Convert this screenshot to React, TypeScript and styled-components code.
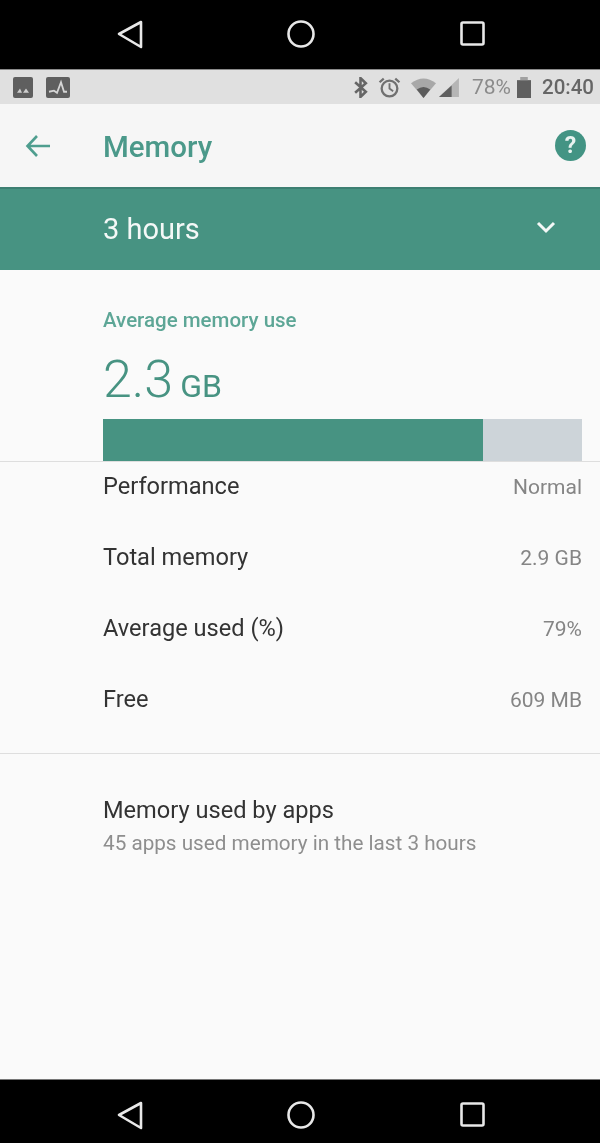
import React from 'react'
import styled, { createGlobalStyle } from 'styled-components'

const GlobalStyle = createGlobalStyle`
  html, body {
    margin: 0;
    padding: 0;
    background: #fafafa;
  }
  * {
    box-sizing: border-box;
  }
`

// the source is a soft, upscaled phone capture
const Screen = styled.div`
  width: 600px;
  height: 1143px;
  display: flex;
  flex-direction: column;
  background: #fafafa;
  font-family: Roboto, 'Liberation Sans', sans-serif;
  overflow: hidden;
  filter: blur(0.5px);
`

const NavBar = styled.div<{ $height: number; $line?: boolean }>`
  height: ${(p) => p.$height}px;
  flex: none;
  background: #000;
  position: relative;
  border-top: ${(p) => (p.$line ? '1px solid #777' : 'none')};
`

const NavIcon = styled.svg<{ $left: number; $top: number }>`
  position: absolute;
  left: ${(p) => p.$left}px;
  top: ${(p) => p.$top}px;
  width: 30px;
  height: 30px;
  fill: none;
  stroke: #e8e8e8;
  stroke-width: 2.6;
  stroke-linejoin: round;
`

const StatusBar = styled.div`
  height: 35px;
  flex: none;
  background: #e0e0e0;
  border-top: 1px solid #8a8a8a;
  display: flex;
  align-items: center;
  padding: 0 6px 0 13px;
  color: #666;
`

const StatusLeft = styled.div`
  display: flex;
  align-items: center;
  gap: 13px;
  flex: 1;
`

const StatusIcon = styled.svg.attrs({ preserveAspectRatio: 'none' })<{ $w: number; $ml?: number }>`
  width: ${(p) => p.$w}px;
  height: 21px;
  display: block;
  margin-left: ${(p) => p.$ml ?? 0}px;
`

const StatusRight = styled.div`
  display: flex;
  align-items: center;
`

const StatusText = styled.span<{ $ml: number; $light?: boolean }>`
  margin-left: ${(p) => p.$ml}px;
  font-size: ${(p) => (p.$light ? 21 : 20.5)}px;
  font-weight: ${(p) => (p.$light ? 400 : 500)};
  line-height: 20px;
  color: ${(p) => (p.$light ? '#8b8b8b' : '#666')};
`

const AppBar = styled.div`
  height: 83px;
  flex: none;
  background: #f6f6f6;
  display: flex;
  align-items: center;
  padding: 0 14px 0 24px;
`

const BackIcon = styled.svg`
  width: 28px;
  height: 28px;
  fill: none;
  stroke: #4f9e8f;
  stroke-width: 2.6;
  margin-right: 51px;
`

const Title = styled.h1`
  flex: 1;
  margin: 3px 0 0;
  font-size: 29.5px;
  font-weight: 500;
  color: #4b998a;
`

const HelpBadge = styled.div`
  width: 31px;
  height: 31px;
  border-radius: 50%;
  background: #439484;
  color: #e8f3f0;
  display: flex;
  align-items: center;
  justify-content: center;
  font-size: 23px;
  font-weight: 700;
`

const RangeBar = styled.div`
  height: 83px;
  flex: none;
  background: #479382;
  border-top: 2px solid #3d7f72;
  display: flex;
  align-items: center;
  justify-content: space-between;
  padding: 0 44px 2px 103px;
  color: #f4f8f7;
  font-size: 29px;
`

const Chevron = styled.svg`
  width: 20px;
  height: 14px;
  fill: none;
  stroke: #f4f8f7;
  stroke-width: 3;
  margin-bottom: 4px;
`

const Summary = styled.section`
  height: 192px;
  flex: none;
  padding: 38px 18px 0 103px;
  display: flex;
  flex-direction: column;
  border-bottom: 1px solid #dedede;
`

const SummaryLabel = styled.div`
  font-size: 20.5px;
  font-weight: 500;
  line-height: 24px;
  color: #5da696;
`

const SummaryValue = styled.div`
  margin-top: 19px;
  height: 58px;
  display: flex;
  align-items: baseline;
  color: #479382;
  font-size: 52px;
  font-weight: 300;
  line-height: 58px;
`

const SummaryUnit = styled.span`
  margin-left: 7px;
  font-size: 32px;
  font-weight: 400;
`

const Meter = styled.div`
  margin-top: auto;
  height: 42px;
  background: #cdd4d9;
  display: flex;
`

const MeterFill = styled.div`
  background: #479382;
`

const StatList = styled.div`
  flex: none;
  height: 292px;
  padding: 10px 18px 0 103px;
  display: flex;
  flex-direction: column;
  gap: 43px;
  border-bottom: 1px solid #dedede;
`

const StatRow = styled.div`
  height: 28px;
  display: flex;
  align-items: center;
  justify-content: space-between;
`

const StatName = styled.span`
  font-size: 23.6px;
  color: #333;
`

const StatValue = styled.span`
  margin-top: 2px;
  font-size: 21px;
  color: #858585;
`

const AppsBlock = styled.div`
  padding: 40px 18px 0 103px;
  flex: 1;
`

const AppsTitle = styled.div`
  font-size: 23.6px;
  line-height: 32px;
  color: #333;
`

const AppsSub = styled.div`
  margin-top: 4px;
  font-size: 20.7px;
  line-height: 26px;
  color: #8e8e8e;
`

function NavButtons({ top }: { top: number }) {
  return (
    <>
      <NavIcon $left={116} $top={top} viewBox="0 0 30 30">
        <path d="M25 3 L3 15 L25 28 Z" />
      </NavIcon>
      <NavIcon $left={286} $top={top} viewBox="0 0 30 30">
        <circle cx="15" cy="15" r="12.5" />
      </NavIcon>
      <NavIcon $left={458} $top={top} viewBox="0 0 30 30">
        <rect x="3.5" y="3.5" width="22" height="22" rx="1.5" />
      </NavIcon>
    </>
  )
}

const stats = [
  ['Performance', 'Normal'],
  ['Total memory', '2.9 GB'],
  ['Average used (%)', '79%'],
  ['Free', '609 MB'],
]

export default function App() {
  return (
    <Screen>
      <GlobalStyle />
      <NavBar $height={69}>
        <NavButtons top={19} />
      </NavBar>
      <StatusBar>
        <StatusLeft>
          <StatusIcon $w={20} viewBox="0 0 20 20">
            <rect x="0" y="0" width="20" height="20" rx="2" fill="#5f5f5f" />
            <path d="M4 15 L7 11 L9 15 M10 15 L13 11 L16 15 Z" fill="#cfcfcf" />
          </StatusIcon>
          <StatusIcon $w={24} viewBox="0 0 24 20">
            <rect x="0" y="0" width="24" height="20" rx="2" fill="#5f5f5f" />
            <path d="M3 14 L8 13 L11 15 L15 5 L18 14 L21 14" fill="none" stroke="#d5d5d5" strokeWidth="1.8" />
          </StatusIcon>
        </StatusLeft>
        <StatusRight>
          <StatusIcon $w={15} viewBox="0 0 14 20">
            <path d="M2 5 L12 14 L7 19 L7 1 L12 6 L2 15" fill="none" stroke="#666" strokeWidth="2.4" />
          </StatusIcon>
          <StatusIcon $w={23} $ml={10} viewBox="0 0 22 20">
            <circle cx="11" cy="11" r="7.5" fill="none" stroke="#707070" strokeWidth="2.2" />
            <path d="M11 6 V11 L14.5 13.5" fill="none" stroke="#707070" strokeWidth="1.8" />
            <path d="M1.5 5 L5.5 1.5 M20.5 5 L16.5 1.5" stroke="#707070" strokeWidth="2.2" />
          </StatusIcon>
          <StatusIcon $w={25} $ml={10} viewBox="0 0 26 20">
            <path d="M0 6 Q13 -3 26 6 L13 20 Z" fill="#a8a8a8" />
            <path d="M6 12 Q13 7 20 12 L13 20 Z" fill="#5c5c5c" />
          </StatusIcon>
          <StatusIcon $w={21} $ml={3} viewBox="0 0 20 20">
            <path d="M0 19 L19 1 V19 Z" fill="#b5b5b5" />
            <path d="M0 19 L12 8 V19 Z" fill="#5f5f5f" />
          </StatusIcon>
          <StatusText $ml={12} $light>78%</StatusText>
          <StatusIcon $w={14} $ml={6} viewBox="0 0 13 20">
            <rect x="0" y="3" width="13" height="17" fill="#5f5f5f" />
            <rect x="3" y="0" width="7" height="3" fill="#a0a0a0" />
          </StatusIcon>
          <StatusText $ml={11}>20:40</StatusText>
        </StatusRight>
      </StatusBar>
      <AppBar>
        <BackIcon viewBox="0 0 28 28">
          <path d="M26 14 H4 M13 4 L3.5 14 L13 24" />
        </BackIcon>
        <Title>Memory</Title>
        <HelpBadge>?</HelpBadge>
      </AppBar>
      <RangeBar>
        <span>3 hours</span>
        <Chevron viewBox="0 0 20 14">
          <path d="M2 3 L10 11 L18 3" />
        </Chevron>
      </RangeBar>
      <Summary>
        <SummaryLabel>Average memory use</SummaryLabel>
        <SummaryValue>
          2.3<SummaryUnit>GB</SummaryUnit>
        </SummaryValue>
        <Meter>
          <MeterFill style={{ width: `${(380 / 479) * 100}%` }} />
        </Meter>
      </Summary>
      <StatList>
        {stats.map(([name, value]) => (
          <StatRow key={name}>
            <StatName>{name}</StatName>
            <StatValue>{value}</StatValue>
          </StatRow>
        ))}
      </StatList>
      <AppsBlock>
        <AppsTitle>Memory used by apps</AppsTitle>
        <AppsSub>45 apps used memory in the last 3 hours</AppsSub>
      </AppsBlock>
      <NavBar $height={64} $line>
        <NavButtons top={20} />
      </NavBar>
    </Screen>
  )
}
